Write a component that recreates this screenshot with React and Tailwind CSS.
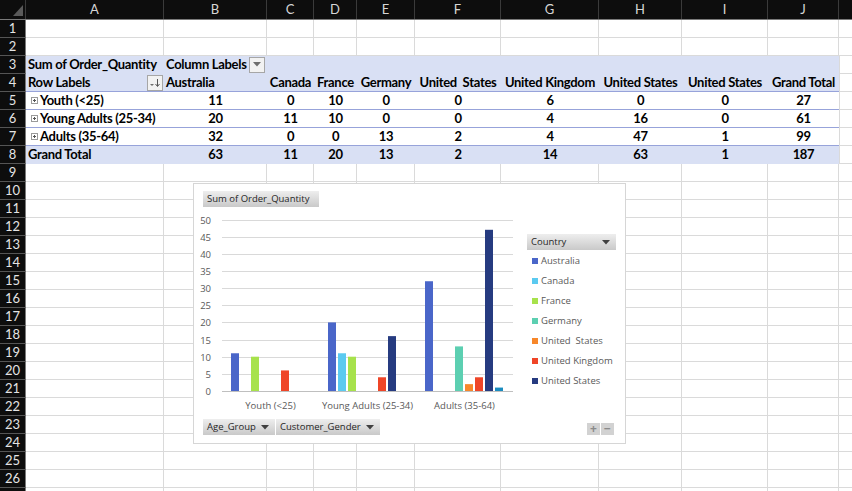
import React from "react";

const COLS = [
  { id: "A", w: "w-[138px]" },
  { id: "B", w: "w-[103px]" },
  { id: "C", w: "w-[47px]" },
  { id: "D", w: "w-[43px]" },
  { id: "E", w: "w-[58px]" },
  { id: "F", w: "w-[86px]" },
  { id: "G", w: "w-[98px]" },
  { id: "H", w: "w-[83px]" },
  { id: "I", w: "w-[86px]" },
  { id: "J", w: "w-[71px]" },
];

const headers = [
  "Canada",
  "France",
  "Germany",
  "United  States",
  "United Kingdom",
  "United States",
  "United States",
  "Grand Total",
];

const body = [
  { row: 5, label: "Youth (<25)", values: [11, 0, 10, 0, 0, 6, 0, 0, 27] },
  { row: 6, label: "Young Adults (25-34)", values: [20, 11, 10, 0, 0, 4, 16, 0, 61] },
  { row: 7, label: "Adults (35-64)", values: [32, 0, 0, 13, 2, 4, 47, 1, 99] },
];
const totals = [63, 11, 20, 13, 2, 14, 63, 1, 187];

const series = [
  { name: "Australia", color: "#4a66c9" },
  { name: "Canada", color: "#5bcaf0" },
  { name: "France", color: "#a7e24c" },
  { name: "Germany", color: "#5ccfb1" },
  { name: "United  States", color: "#f7872a" },
  { name: "United Kingdom", color: "#ef4527" },
  { name: "United States", color: "#263b80" },
  { name: "United States", color: "#1a8cbf", hidden: true },
];

const groups = [
  { name: "Youth (<25)", values: [11, 0, 10, 0, 0, 6, 0, 0] },
  { name: "Young Adults (25-34)", values: [20, 11, 10, 0, 0, 4, 16, 0] },
  { name: "Adults (35-64)", values: [32, 0, 0, 13, 2, 4, 47, 1] },
];

const SHADE = "bg-[#d9e0f4]";

function Caret() {
  return (
    <svg width="8" height="5" viewBox="0 0 8 5" className="shrink-0">
      <polygon points="0,0 8,0 4,4.5" fill="#404040" />
    </svg>
  );
}

function ExpandBox() {
  return (
    <svg width="7" height="7" viewBox="0 0 7 7" className="mr-[2px] shrink-0">
      <rect x="0.5" y="0.5" width="6" height="6" fill="#fff" stroke="#9a9a9a" />
      <line x1="2" y1="3.5" x2="5" y2="3.5" stroke="#555" />
      <line x1="3.5" y1="2" x2="3.5" y2="5" stroke="#555" />
    </svg>
  );
}

function RowHead({ n }) {
  return (
    <div className="w-[26px] shrink-0 h-full bg-[#0d0d0d] border-r border-b border-r-[#7a7a7a] border-b-[#555] flex items-center justify-center text-[13px] text-[#e4e4e4]">
      {n}
    </div>
  );
}

function PlainRow({ n }) {
  return (
    <div className="flex h-[18px]">
      <RowHead n={n} />
      {COLS.map((c) => (
        <div key={c.id} className={`${c.w} shrink-0 h-full border-r border-b border-[#dadada]`} />
      ))}
      <div className="flex-1 h-full border-b border-[#dadada]" />
    </div>
  );
}

function PivotRow({ n, shade, line, children }) {
  const bg = shade ? SHADE : "bg-white";
  const border = line ? "border-[#97a3da]" : shade ? "border-[#d9e0f4]" : "border-white";
  return (
    <div className="flex h-[18px]">
      <RowHead n={n} />
      <div className={`flex w-[813px] shrink-0 h-full border-b ${border} ${bg} font-bold text-[13px] tracking-[-0.3px] text-black whitespace-nowrap`}>
        {children}
      </div>
      <div className="flex-1 h-full border-l border-b border-[#dadada]" />
    </div>
  );
}

function NumCells({ values }) {
  return values.map((v, i) => (
    <div key={i} className={`${COLS[i + 1].w} shrink-0 flex items-center justify-center`}>
      {v}
    </div>
  ));
}

function FieldButton({ label, w, caret = true }) {
  return (
    <div className={`${w} h-[16px] flex items-center justify-between pl-[4px] pr-[6px] bg-linear-to-b from-[#eeeeee] to-[#c9c9c9] text-[#262626] whitespace-nowrap`}>
      <span>{label}</span>
      {caret && <Caret />}
    </div>
  );
}

function Chart() {
  const zero = 184;
  const k = 3.43;
  const ticks = [0, 5, 10, 15, 20, 25, 30, 35, 40, 45, 50];
  return (
    <div className="absolute left-[193px] top-[183px] w-[433px] h-[261px] border border-[#d6d6d6] bg-white flex flex-col font-['Open_Sans',sans-serif] text-[9.5px] text-[#595959]">
      <div className="pt-[7px] pl-[9px]">
        <FieldButton label="Sum of Order_Quantity" w="w-[116px]" caret={false} />
      </div>
      <div className="flex h-[208px]">
        <svg width="326" height="208" viewBox="0 0 326 208" className="shrink-0">
          {ticks.map((t) => {
            const y = Math.round(zero - t * k) + 0.5;
            return (
              <g key={t}>
                <line x1="28" x2="319" y1={y} y2={y} stroke={t === 0 ? "#bfbfbf" : "#d9d9d9"} />
                <text x="17" y={y + 3} textAnchor="end" fill="#595959" fontSize="9.5">
                  {t}
                </text>
              </g>
            );
          })}
          {groups.map((g, gi) => (
            <g key={g.name}>
              {g.values.map((v, i) =>
                v > 0 ? (
                  <rect
                    key={i}
                    x={28 + gi * 97 + 9 + i * 10}
                    y={zero - v * k}
                    width="8"
                    height={v * k}
                    fill={series[i].color}
                  />
                ) : null
              )}
              <text x={28 + gi * 97 + 48.5} y="201.5" textAnchor="middle" fill="#595959" fontSize="9.5">
                {g.name}
              </text>
            </g>
          ))}
        </svg>
        <div className="ml-[7px] w-[89px] pt-[27px]">
          <FieldButton label="Country" w="w-[89px]" />
          <div className="mt-[1px]">
            {series
              .filter((s) => !s.hidden)
              .map((s, i) => (
                <div key={i} className="h-[20px] flex items-center whitespace-pre">
                  <span className="ml-[5px] w-[6px] h-[6px]" style={{ backgroundColor: s.color }} />
                  <span className="ml-[3px]">{s.name}</span>
                </div>
              ))}
          </div>
        </div>
      </div>
      <div className="flex items-end mt-[4px] pl-[9px] pr-[11px] h-[16px]">
        <FieldButton label="Age_Group" w="w-[72px]" />
        <div className="ml-[1px]">
          <FieldButton label="Customer_Gender" w="w-[104px]" />
        </div>
        <div className="ml-auto flex gap-[1px]">
          <div className="w-[13px] h-[12px] bg-[#d2d2d2] flex items-center justify-center text-[#8a8a8a] text-[12px] leading-none font-bold">
            +
          </div>
          <div className="w-[13px] h-[12px] bg-[#d2d2d2] flex items-center justify-center text-[#8a8a8a] text-[12px] leading-none font-bold">
            −
          </div>
        </div>
      </div>
    </div>
  );
}

export default function App() {
  const plainAfter = Array.from({ length: 18 }, (_, i) => i + 9);
  return (
    <div className="relative w-[852px] h-[491px] overflow-hidden bg-white font-['Lato',sans-serif]">
      <div className="flex h-[20px] bg-[#0d0d0d] border-b border-[#7a7a7a] text-[13px] text-[#d6d6d6]">
        <div className="w-[26px] shrink-0 h-full border-r border-[#3a3a3a] relative">
          <svg width="26" height="19" viewBox="0 0 26 19" className="block">
            <polygon points="23,5 23,16 13,16" fill="#5a5a5a" />
          </svg>
        </div>
        {COLS.map((c) => (
          <div key={c.id} className={`${c.w} shrink-0 h-full border-r border-[#3a3a3a] flex items-center justify-center`}>
            {c.id}
          </div>
        ))}
        <div className="flex-1" />
      </div>

      <PlainRow n={1} />
      <PlainRow n={2} />

      <PivotRow n={3} shade>
        <div className={`${COLS[0].w} shrink-0 flex items-center pl-[2px]`}>Sum of Order_Quantity</div>
        <div className={`${COLS[1].w} shrink-0 flex items-center pl-[2px] pr-[2px] justify-between`}>
          <span>Column Labels</span>
          <div className="w-[16px] h-[16px] border border-[#a6a6a6] bg-[#f2f2f2] flex items-center justify-center">
            <svg width="8" height="5" viewBox="0 0 8 5">
              <polygon points="0,0 8,0 4,4.5" fill="#6e6e6e" />
            </svg>
          </div>
        </div>
      </PivotRow>

      <PivotRow n={4} shade line>
        <div className={`${COLS[0].w} shrink-0 flex items-center pl-[2px] pr-[1px] justify-between`}>
          <span>Row Labels</span>
          <div className="w-[16px] h-[16px] border border-[#a6a6a6] bg-[#f2f2f2] flex items-center justify-center">
            <svg width="12" height="10" viewBox="0 0 12 10">
              <polygon points="1,6 5,6 3,8" fill="#6e6e6e" />
              <line x1="8.5" y1="1" x2="8.5" y2="8" stroke="#555" />
              <polyline points="6.5,6 8.5,8.5 10.5,6" fill="none" stroke="#555" />
            </svg>
          </div>
        </div>
        <div className={`${COLS[1].w} shrink-0 flex items-center pl-[2px]`}>Australia</div>
        {headers.map((h, i) => (
          <div key={i} className={`${COLS[i + 2].w} shrink-0 flex items-center justify-center whitespace-pre`}>
            {h}
          </div>
        ))}
      </PivotRow>

      {body.map((r) => (
        <PivotRow key={r.row} n={r.row} line>
          <div className={`${COLS[0].w} shrink-0 flex items-center pl-[5px]`}>
            <ExpandBox />
            <span>{r.label}</span>
          </div>
          <NumCells values={r.values} />
        </PivotRow>
      ))}

      <PivotRow n={8} shade>
        <div className={`${COLS[0].w} shrink-0 flex items-center pl-[2px]`}>Grand Total</div>
        <NumCells values={totals} />
      </PivotRow>

      {plainAfter.map((n) => (
        <PlainRow key={n} n={n} />
      ))}
      <div className="flex h-[18px]">
        <div className="w-[26px] shrink-0 h-full bg-[#0d0d0d] border-r border-[#7a7a7a]" />
        {COLS.map((c) => (
          <div key={c.id} className={`${c.w} shrink-0 h-full border-r border-[#dadada]`} />
        ))}
      </div>

      <Chart />
    </div>
  );
}
